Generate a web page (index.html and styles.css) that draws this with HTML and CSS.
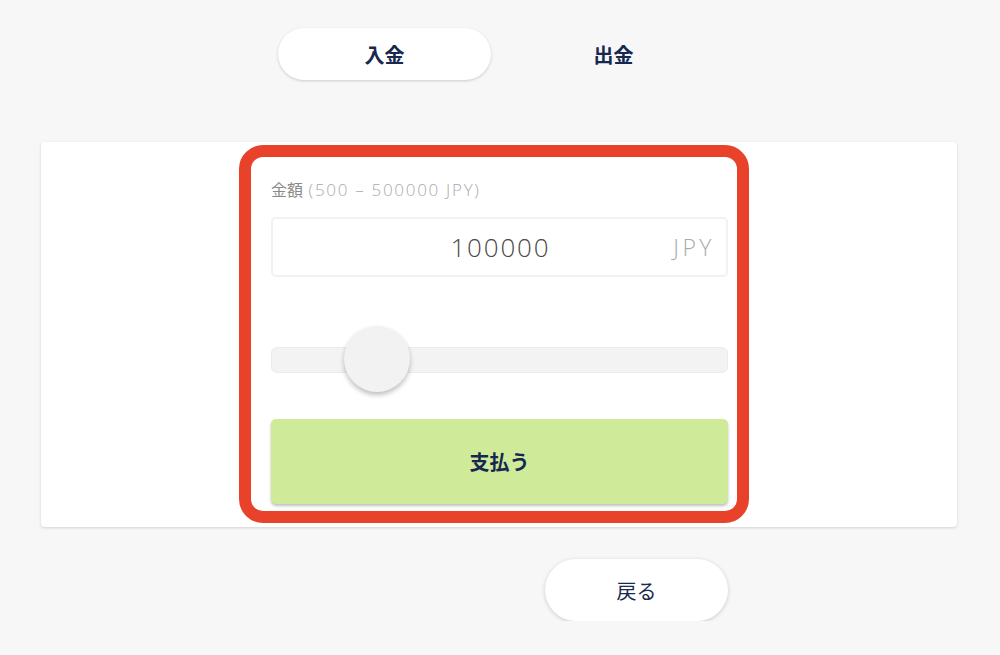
FILE: index.html
```html
<!DOCTYPE html>
<html lang="ja">
<head>
    <meta charset="UTF-8">
    <meta name="viewport" content="width=device-width, initial-scale=1.0">
    <title>入金</title>
    <link rel="stylesheet" href="styles.css">
</head>
<body>
    <div class="tabs">
        <div class="tab active">入金</div>
        <div class="tab">出金</div>
    </div>

    <div class="card">
        <div class="deposit-form">
            <div class="amount-label">金額 <span class="range">(500 – 500000 JPY)</span></div>
            <div class="amount-input">
                <span class="amount-value">100000</span>
                <span class="currency">JPY</span>
            </div>
            <div class="slider">
                <div class="slider-track"></div>
                <div class="slider-thumb"></div>
            </div>
            <button class="pay-btn">支払う</button>
        </div>
    </div>

    <div class="footer">
        <button class="back-btn">戻る</button>
    </div>
</body>
</html>
```

FILE: styles.css
```css
body {
    font-family: "Noto Sans CJK JP", "Noto Sans", sans-serif;
    margin: 0;
    padding: 0;
    background-color: #f7f7f7;
    color: #1a2a50;
}

.tabs {
    display: flex;
    justify-content: center;
    gap: 16px;
    padding-top: 28px;
    margin-left: -2px;
}

.tab {
    width: 213px;
    height: 52px;
    border-radius: 26px;
    display: flex;
    align-items: center;
    justify-content: center;
    font-size: 20px;
    font-weight: 700;
    color: #16284f;
}

.tab.active {
    background: #fff;
    box-shadow: 0 1px 3px rgba(0, 0, 0, 0.18);
}

.card {
    margin: 62px 43px 0 41px;
    background: #fff;
    border-radius: 4px;
    box-shadow: 0 1px 3px rgba(0, 0, 0, 0.15);
    padding: 3px 0 4px;
}

.deposit-form {
    width: 510px;
    box-sizing: border-box;
    margin-left: 198px;
    border: 12px solid #e8432a;
    border-radius: 24px;
    padding: 19px 9px 7px 20px;
}

.amount-label {
    font-size: 16px;
    color: #8a8a8a;
    font-weight: 400;
    line-height: 26px;
}

.range {
    font-family: "Open Sans", "Noto Sans", sans-serif;
    font-size: 17px;
    font-weight: 300;
    color: #aaa;
    letter-spacing: 1.7px;
    margin-left: 2px;
}

.amount-input {
    position: relative;
    margin-top: 14px;
    height: 60px;
    border: 2px solid #f2f2f2;
    border-radius: 5px;
    box-sizing: border-box;
    display: flex;
    align-items: center;
    justify-content: center;
}

.amount-value {
    font-family: "Open Sans", "Noto Sans", sans-serif;
    font-weight: 300;
    font-size: 26px;
    letter-spacing: 1.8px;
    margin-right: -1.8px;
    color: #4a4a4a;
}

.currency {
    position: absolute;
    right: 11px;
    font-family: "Open Sans", "Noto Sans", sans-serif;
    font-weight: 300;
    font-size: 23px;
    letter-spacing: 3.5px;
    color: #aaa;
}

.slider {
    position: relative;
    height: 70px;
    margin-top: 48px;
    display: flex;
    align-items: center;
}

.slider-track {
    width: 100%;
    height: 26px;
    background: #f3f3f3;
    border: 1px solid #ebebeb;
    border-radius: 6px;
    box-sizing: border-box;
}

.slider-thumb {
    position: absolute;
    left: 73px;
    top: 1px;
    width: 66px;
    height: 66px;
    border-radius: 50%;
    background: #f2f2f2;
    box-shadow: 0 3px 5px rgba(0, 0, 0, 0.25);
}

.pay-btn {
    display: block;
    width: 100%;
    height: 85px;
    margin-top: 24px;
    background-color: #cfeb9a;
    color: #16284f;
    font-family: inherit;
    font-size: 20px;
    font-weight: 700;
    border: none;
    border-radius: 5px;
    box-shadow: 0 2px 3px rgba(0, 0, 0, 0.25);
    cursor: pointer;
}

.footer {
    display: flex;
    justify-content: flex-end;
    padding: 32px 272px 0 0;
}

.back-btn {
    width: 183px;
    height: 62px;
    border: none;
    border-radius: 31px;
    background: #fff;
    box-shadow: 0 1px 4px rgba(0, 0, 0, 0.18);
    font-family: inherit;
    font-size: 20px;
    color: #1a2a50;
    cursor: pointer;
}
```
